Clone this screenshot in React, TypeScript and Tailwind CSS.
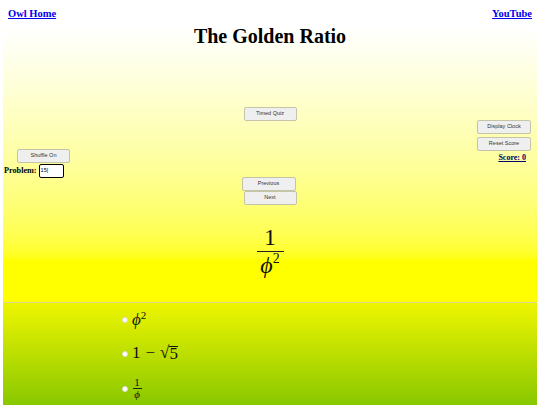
function Btn({ label, className }: { label: string; className: string }) {
  return (
    <button className={`h-[14px] flex items-center justify-center bg-[#efefef] border border-[#c4c4a8] rounded-[2px] text-[5.5px] text-[#333] font-['Liberation_Sans',sans-serif] leading-none ${className}`}>
      {label}
    </button>
  );
}

function Radio() {
  return <span className="w-[6px] h-[6px] rounded-full bg-white border border-[#ddd] shrink-0" />;
}

const math = "font-['Liberation_Serif',serif] text-[#111]";

export default function App() {
  return (
    <div className="w-[540px] h-[405px] overflow-hidden bg-white font-['Liberation_Serif',serif] text-black">
      <div className="h-[27px] flex justify-between items-start pl-[8px] pr-[8px] pt-[7px] text-[10.5px] font-bold leading-[14px] text-[#0000ee]">
        <a className="underline" href="#">Owl Home</a>
        <a className="underline" href="#">YouTube</a>
      </div>
      <div className="h-[275px] ml-[3px] w-[534px] bg-gradient-to-b from-white to-[#ffff00] to-85%">
        <h1 className="text-center text-[20px] font-bold leading-[18px] h-[78px]">The Golden Ratio</h1>
        <div className="grid grid-cols-3 h-[197px]">
          <div className="flex flex-col items-start pt-[44px]">
            <Btn label="Shuffle On" className="w-[53px] ml-[14px]" />
            <div className="flex items-center mt-[1px] text-[8.2px] font-bold leading-none">
              <span className="ml-[1px]">Problem:</span>
              <span className="ml-[2px] w-[25px] h-[14px] bg-white border border-black rounded-[2px] flex items-center pl-[1px] text-[5.5px] font-normal font-['Liberation_Sans',sans-serif]">15|</span>
            </div>
          </div>
          <div className="flex flex-col items-center pt-[2px]">
            <Btn label="Timed Quiz" className="w-[53px]" />
            <Btn label="Previous" className="w-[54px] mt-[56px] -ml-[3px]" />
            <Btn label="Next" className="w-[53px]" />
            <div className={`flex flex-col items-center mt-[19px] ${math}`}>
              <span className="text-[24px] leading-[27px]">1</span>
              <span className="w-[27px] h-[1px] bg-[#222]" />
              <span className="flex items-start h-[26px]">
                <span className="text-[24px] leading-[27px] italic">ϕ</span>
                <span className="text-[14px] leading-[14px]">2</span>
              </span>
            </div>
          </div>
          <div className="flex flex-col items-end pt-[15px] pr-[6px]">
            <Btn label="Display Clock" className="w-[54px]" />
            <Btn label="Reset Score" className="w-[54px] mt-[3px]" />
            <span className="mt-[1px] mr-[5px] text-[8px] font-bold leading-[12px] underline text-[#00006e]">Score: 0</span>
          </div>
        </div>
      </div>
      <div className="h-[103px] ml-[3px] w-[534px] border-t border-[#d8d890] bg-gradient-to-b from-[#eef500] to-[#88c800] flex flex-col items-start pl-[119px] pt-[4px]">
        <div className={`flex items-center gap-[4px] h-[26px] ${math}`}>
          <Radio />
          <span className="flex items-start">
            <span className="italic text-[17px] leading-[20px]">ϕ</span>
            <span className="text-[11px] leading-[11px]">2</span>
          </span>
        </div>
        <div className={`flex items-center gap-[4px] h-[36px] mt-[3px] ${math} text-[17px]`}>
          <Radio />
          <span className="flex items-center -mt-[2px]">
            1<span className="mx-[5px]">−</span>
            <span>√</span><span className="border-t border-[#111] leading-[14px]">5</span>
          </span>
        </div>
        <div className={`flex items-center gap-[4px] mt-[5px] ${math}`}>
          <Radio />
          <span className="flex flex-col items-center w-[10px] text-[11px] leading-[11px]">
            <span>1</span>
            <span className="w-[9px] h-[1px] bg-[#222]" />
            <span className="italic">ϕ</span>
          </span>
        </div>
      </div>
    </div>
  );
}
